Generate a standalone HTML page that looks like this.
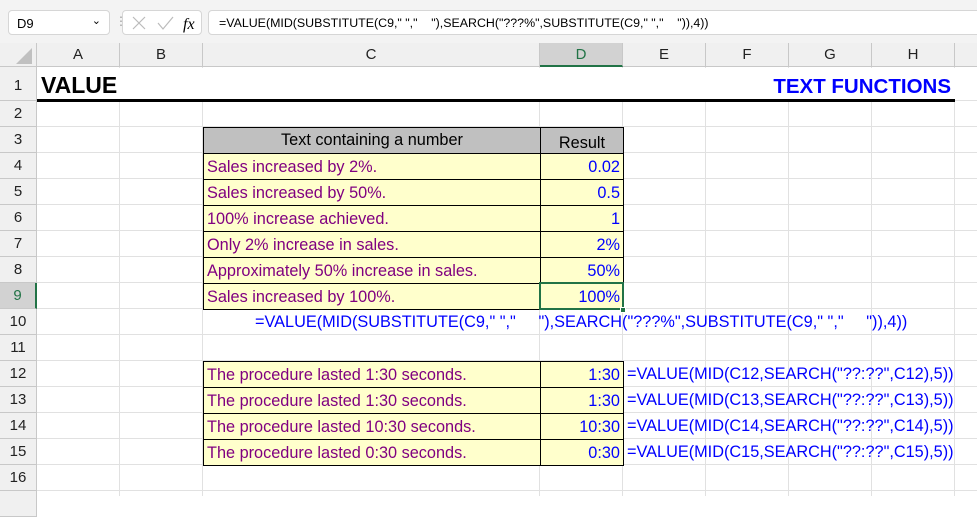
<!DOCTYPE html>
<html><head><meta charset="utf-8"><style>
*{box-sizing:border-box;margin:0;padding:0}
body{width:977px;height:496px;overflow:hidden;background:#fff;font-family:"Liberation Sans",Arial,sans-serif;position:relative}
.a{position:absolute}
.top{left:0;top:0;width:977px;height:43px;background:#f3f3f3}
.nb{left:8px;top:10px;width:102px;height:25px;background:#fff;border:1px solid #d6d6d6;border-radius:4px;font-size:13px;padding:5px 0 0 8px}
.fb{left:122px;top:10px;width:80px;height:25px;background:#fff;border:1px solid #d6d6d6;border-radius:4px}
.fx{left:208px;top:10px;width:775px;height:25px;background:#fff;border:1px solid #d6d6d6;border-radius:4px;font-size:12.4px;padding:5px 0 0 10px;white-space:pre}
.ch{top:43px;height:24px;background:#f0f0f0;border-right:1px solid #c8c8c8;border-bottom:1px solid #c8c8c8;text-align:center;font-size:15px;line-height:24px;color:#222}
.rh{left:0;width:37px;background:#f0f0f0;border-right:1px solid #c8c8c8;border-bottom:1px solid #c8c8c8;text-align:center;font-size:15px;color:#222}
.vl{top:67px;width:1px;height:429px;background:#e1e1e1}
.hl{left:37px;width:940px;height:1px;background:#e1e1e1}
.c{font-size:16.3px;white-space:pre;line-height:26px;height:27px;border:1px solid #000;background:#ffffcc;padding:0 3px}
.p{color:#800080}.b{color:#0000ff;text-align:right}
.t{color:#0000ff;font-size:16.3px;white-space:pre;line-height:26px}
</style></head><body>
<div class="a top"></div>
<div class="a nb">D9<span style="position:absolute;right:8px;top:3px;font-size:11px">&#8964;</span></div>
<div class="a" style="left:115px;top:14px;color:#999;font-size:12px">&#8942;</div>
<div class="a fb">
<svg width="80" height="25" style="position:absolute;left:0;top:0"><path d="M10 6l12 12M22 6l-12 12" stroke="#bbb" stroke-width="1.2" fill="none"/><path d="M35 12l5 6 10-12" stroke="#bbb" stroke-width="1.2" fill="none"/><text x="60" y="18" font-family="Liberation Serif,serif" font-style="italic" font-size="16">fx</text></svg></div>
<div class="a fx">=VALUE(MID(SUBSTITUTE(C9," ","    "),SEARCH("???%",SUBSTITUTE(C9," ","    ")),4))</div>

<div class="a ch" style="left:0;width:37px"><svg width="36" height="23"><path d="M32 5v16H16z" fill="#c0c0c0"/></svg></div>
<div class="a ch" style="left:37px;width:83px">A</div>
<div class="a ch" style="left:120px;width:83px">B</div>
<div class="a ch" style="left:203px;width:337px">C</div>
<div class="a ch" style="left:540px;width:83px;background:#d2d2d2;border-bottom:2px solid #217346;color:#217346">D</div>
<div class="a ch" style="left:623px;width:83px">E</div>
<div class="a ch" style="left:706px;width:83px">F</div>
<div class="a ch" style="left:789px;width:83px">G</div>
<div class="a ch" style="left:872px;width:83px">H</div>
<div class="a ch" style="left:955px;width:30px"></div>

<div class="a vl" style="left:119px"></div><div class="a vl" style="left:202px"></div><div class="a vl" style="left:539px"></div><div class="a vl" style="left:622px"></div><div class="a vl" style="left:705px"></div><div class="a vl" style="left:788px"></div><div class="a vl" style="left:871px"></div><div class="a vl" style="left:954px"></div>
<div class="a hl" style="top:100px"></div><div class="a hl" style="top:126px"></div><div class="a hl" style="top:152px"></div><div class="a hl" style="top:178px"></div><div class="a hl" style="top:204px"></div><div class="a hl" style="top:230px"></div><div class="a hl" style="top:256px"></div><div class="a hl" style="top:282px"></div><div class="a hl" style="top:308px"></div><div class="a hl" style="top:334px"></div><div class="a hl" style="top:360px"></div><div class="a hl" style="top:386px"></div><div class="a hl" style="top:412px"></div><div class="a hl" style="top:438px"></div><div class="a hl" style="top:464px"></div><div class="a hl" style="top:490px"></div>

<div class="a rh" style="top:67px;height:34px;line-height:38px">1</div>
<div class="a rh" style="top:101px;height:26px;line-height:26px">2</div>
<div class="a rh" style="top:127px;height:26px;line-height:26px">3</div>
<div class="a rh" style="top:153px;height:26px;line-height:26px">4</div>
<div class="a rh" style="top:179px;height:26px;line-height:26px">5</div>
<div class="a rh" style="top:205px;height:26px;line-height:26px">6</div>
<div class="a rh" style="top:231px;height:26px;line-height:26px">7</div>
<div class="a rh" style="top:257px;height:26px;line-height:26px">8</div>
<div class="a rh" style="top:283px;height:26px;line-height:26px;background:#d2d2d2;border-right:2px solid #217346;color:#217346">9</div>
<div class="a rh" style="top:309px;height:26px;line-height:26px">10</div>
<div class="a rh" style="top:335px;height:26px;line-height:26px">11</div>
<div class="a rh" style="top:361px;height:26px;line-height:26px">12</div>
<div class="a rh" style="top:387px;height:26px;line-height:26px">13</div>
<div class="a rh" style="top:413px;height:26px;line-height:26px">14</div>
<div class="a rh" style="top:439px;height:26px;line-height:26px">15</div>
<div class="a rh" style="top:465px;height:26px;line-height:26px">16</div>
<div class="a rh" style="top:491px;height:26px"></div>

<div class="a" style="left:37px;top:68px;width:918px;height:31px;background:#fff"></div>
<div class="a" style="left:41px;top:72px;font-size:23px;font-weight:bold">VALUE</div>
<div class="a" style="left:650px;top:75px;width:301px;text-align:right;font-size:20.5px;font-weight:bold;color:#0000ff">TEXT FUNCTIONS</div>
<div class="a" style="left:37px;top:99px;width:918px;height:3px;background:#000"></div>

<div class="a c" style="left:203px;top:127px;width:338px;background:#c0c0c0;text-align:center;line-height:24px">Text containing a number</div>
<div class="a c" style="left:540px;top:127px;width:84px;background:#c0c0c0;text-align:center;line-height:30px">Result</div>
<div class="a c p" style="left:203px;top:153px;width:338px">Sales increased by 2%.</div><div class="a c b" style="left:540px;top:153px;width:84px">0.02</div>
<div class="a c p" style="left:203px;top:179px;width:338px">Sales increased by 50%.</div><div class="a c b" style="left:540px;top:179px;width:84px">0.5</div>
<div class="a c p" style="left:203px;top:205px;width:338px">100% increase achieved.</div><div class="a c b" style="left:540px;top:205px;width:84px">1</div>
<div class="a c p" style="left:203px;top:231px;width:338px">Only 2% increase in sales.</div><div class="a c b" style="left:540px;top:231px;width:84px">2%</div>
<div class="a c p" style="left:203px;top:257px;width:338px">Approximately 50% increase in sales.</div><div class="a c b" style="left:540px;top:257px;width:84px">50%</div>
<div class="a c p" style="left:203px;top:283px;width:338px">Sales increased by 100%.</div><div class="a c b" style="left:540px;top:283px;width:84px">100%</div>
<div class="a" style="left:539px;top:282px;width:85px;height:28px;border:2px solid #217346"></div>
<div class="a" style="left:620px;top:307px;width:6px;height:6px;background:#217346;border:1px solid #fff"></div>

<div class="a t" style="left:255px;top:309px">=VALUE(MID(SUBSTITUTE(C9," ","     "),SEARCH("???%",SUBSTITUTE(C9," ","     ")),4))</div>

<div class="a c p" style="left:203px;top:361px;width:338px">The procedure lasted 1:30 seconds.</div><div class="a c b" style="left:540px;top:361px;width:84px">1:30</div>
<div class="a c p" style="left:203px;top:387px;width:338px">The procedure lasted 1:30 seconds.</div><div class="a c b" style="left:540px;top:387px;width:84px">1:30</div>
<div class="a c p" style="left:203px;top:413px;width:338px">The procedure lasted 10:30 seconds.</div><div class="a c b" style="left:540px;top:413px;width:84px">10:30</div>
<div class="a c p" style="left:203px;top:439px;width:338px">The procedure lasted 0:30 seconds.</div><div class="a c b" style="left:540px;top:439px;width:84px">0:30</div>
<div class="a t" style="left:627px;top:361px">=VALUE(MID(C12,SEARCH("??:??",C12),5))</div>
<div class="a t" style="left:627px;top:387px">=VALUE(MID(C13,SEARCH("??:??",C13),5))</div>
<div class="a t" style="left:627px;top:413px">=VALUE(MID(C14,SEARCH("??:??",C14),5))</div>
<div class="a t" style="left:627px;top:439px">=VALUE(MID(C15,SEARCH("??:??",C15),5))</div>
</body></html>
